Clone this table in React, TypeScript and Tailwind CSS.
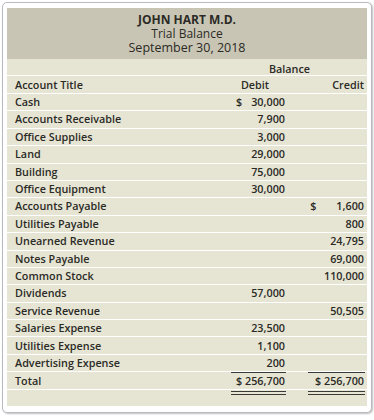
type Row = { name: string; debit?: string; credit?: string; dollarDebit?: boolean; dollarCredit?: boolean };

const rows: Row[] = [
  { name: 'Cash', debit: '30,000', dollarDebit: true },
  { name: 'Accounts Receivable', debit: '7,900' },
  { name: 'Office Supplies', debit: '3,000' },
  { name: 'Land', debit: '29,000' },
  { name: 'Building', debit: '75,000' },
  { name: 'Office Equipment', debit: '30,000' },
  { name: 'Accounts Payable', credit: '1,600', dollarCredit: true },
  { name: 'Utilities Payable', credit: '800' },
  { name: 'Unearned Revenue', credit: '24,795' },
  { name: 'Notes Payable', credit: '69,000' },
  { name: 'Common Stock', credit: '110,000' },
  { name: 'Dividends', debit: '57,000' },
  { name: 'Service Revenue', credit: '50,505' },
  { name: 'Salaries Expense', debit: '23,500' },
  { name: 'Utilities Expense', debit: '1,100' },
  { name: 'Advertising Expense', debit: '200' },
];

export default function App() {
  return (
    <div
      className="w-[374px] h-[420px] bg-white p-[2px] text-[#2b2a26]"
      style={{ fontFamily: '"Open Sans", "Liberation Sans", sans-serif' }}
    >
      <div className="h-[411px] rounded-[5px] border border-[#b9b9c0] bg-white px-[4px] pt-[5px] pb-[3px] shadow-[1px_1px_2px_rgba(0,0,0,0.25)]">
        {/* Header */}
        <div className="h-[51px] bg-[#c9c5b4] flex flex-col items-center justify-center leading-[14px] text-[12px] pt-[1px]">
          <div className="font-bold">JOHN HART M.D.</div>
          <div>Trial Balance</div>
          <div className="text-[12.5px]">September 30, 2018</div>
        </div>

        <div className="bg-[#e6e5d4] text-[10.8px] font-semibold">
          {/* Balance row */}
          <div className="grid grid-cols-[1fr_80px_77px] h-[17px] items-center border-b border-white pt-[2px]">
            <div />
            <div className="col-span-2 text-center pl-[2px]">Balance</div>
          </div>
          <div className="grid grid-cols-[1fr_80px_77px] h-[18px] items-center border-b border-white pt-[1px]">
            <div className="pl-[8px]">Account Title</div>
            <div className="text-center pl-[10px]">Debit</div>
            <div className="text-right pr-[3px]">Credit</div>
          </div>

          {rows.map((r) => (
            <div
              key={r.name}
              className="grid grid-cols-[1fr_80px_77px] h-[17.4px] items-center border-b border-white"
            >
              <div className="pl-[8px]">{r.name}</div>
              <div className="flex justify-end pr-[5px]">
                {r.dollarDebit && <span className="mr-[9px]">$</span>}
                <span>{r.debit}</span>
              </div>
              <div className="flex justify-end pr-[3px]">
                {r.dollarCredit && <span className="mr-[20px]">$</span>}
                <span>{r.credit}</span>
              </div>
            </div>
          ))}

          {/* Total */}
          <div className="grid grid-cols-[1fr_80px_77px] h-[17.5px] items-stretch border-b border-white">
            <div className="pl-[8px] flex items-center">Total</div>
            <div className="flex justify-end pr-[4px]">
              <div className="w-[55px] border-t border-[#3a3a36] flex items-center justify-end pr-[1px]">
                $ 256,700
              </div>
            </div>
            <div className="flex justify-end pr-[2px]">
              <div className="w-[57px] border-t border-[#3a3a36] flex items-center justify-end pr-[1px]">
                $ 256,700
              </div>
            </div>
          </div>
          <div className="grid grid-cols-[1fr_80px_77px] h-[16px]">
            <div />
            <div className="flex justify-end pr-[4px]">
              <div className="w-[55px] h-[4px] mt-[1px] border-y border-[#3a3a36]" />
            </div>
            <div className="flex justify-end pr-[2px]">
              <div className="w-[57px] h-[4px] mt-[1px] border-y border-[#3a3a36]" />
            </div>
          </div>
        </div>
      </div>
    </div>
  );
}
